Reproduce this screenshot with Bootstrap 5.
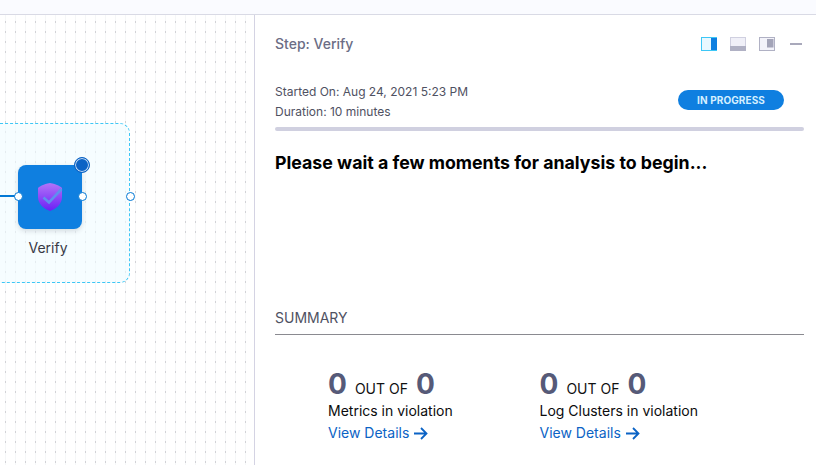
<!DOCTYPE html>
<html lang="en">
<head>
<meta charset="utf-8">
<title>Step: Verify</title>
<link rel="stylesheet" href="https://cdn.jsdelivr.net/npm/bootstrap@5.3.0/dist/css/bootstrap.min.css">
<style>
html,body{height:465px;overflow:hidden;background:#fff;font-family:Inter,"Liberation Sans",sans-serif}
.shell{height:465px}
.topstrip{height:15px;background:#fafbff;border-bottom:1px solid #d9dae5;flex:none}
.canvas-area{width:255px;flex:none;position:relative;border-right:1px solid #d4d3e3;overflow:hidden;background-color:#fff;
 background-image:linear-gradient(to bottom,#d2d2d6 0,#d2d2d6 2px,#f5f7f8 2px,#f5f7f8 10px);background-size:10px 10px;background-position:5px 6px;}
.canvas-grid{position:absolute;inset:0;background-image:linear-gradient(to right,transparent 0,transparent 1px,#fff 1px,#fff 10px);background-size:10px 10px;background-position:5px 0}
.grp{position:absolute;left:-20px;top:108px;width:150px;height:160px;border:1px dashed #3dc7f6;border-radius:10px;background:rgba(240,251,255,.6)}
.wire{position:absolute;left:0;top:180px;width:18px;height:2px;background:#0278d5}
.nodebox{position:absolute;left:18px;top:150px;width:64px;height:64px;border-radius:8px;background:#0f7fe0;box-shadow:0 2px 5px rgba(40,41,61,.16);display:flex;align-items:center;justify-content:center}
.port{position:absolute;width:9px;height:9px;border-radius:50%;background:#fff;border:1px solid #0278d5}
.port-a{left:13.5px;top:176.5px}.port-b{left:77.5px;top:176.5px}.port-c{left:125.5px;top:176.5px}
.running{position:absolute;left:74px;top:142px;width:16px;height:16px;border-radius:50%;background:#0b63c5;border:1px solid #0b63c5;box-shadow:inset 0 0 0 1px #c4dcf5}
.nodelabel{position:absolute;left:18px;top:224px;width:60px;text-align:center;font-size:14px;line-height:18px;color:#383946}
.detail{padding:0 12px 0 20px;min-width:0}
.stephead{height:58px;flex:none}
.steptitle{font-size:14px;font-weight:500;color:#6b6d85;line-height:20px}
.viewicons{gap:13px;margin-top:-1px;margin-right:2px}
.dashicon{margin-left:2px}
.meta{font-size:12px;line-height:20px;color:#4f5162;margin-top:9px}
.statuspill{width:106px;height:20px;border-radius:10px;background:#0f7fe0;color:#d5efff;font-size:10px;font-weight:700;line-height:20px;text-align:center;letter-spacing:.1px;margin-top:17px;margin-right:20px}
.prog{height:4px;border-radius:2px;background:#d0d0e0;margin-top:5px}
.waitmsg{font-size:17.75px;font-weight:700;color:#000;line-height:24px;margin:20px 0 0}
.sumhead{font-size:14px;line-height:20px;color:#4f5162;margin-top:133px;padding-bottom:6px;border-bottom:1px solid #8a8a90}
.stats{padding-left:53px;margin-top:35px}
.statcol{width:211.5px;flex:none}
.bignum{font-size:28px;font-weight:700;color:#565a78;line-height:28px}
.outof{font-size:14px;font-weight:400;color:#111;margin:0 8px;line-height:1}
.statlabel{font-size:14px;line-height:20px;color:#0b0b0d;margin-top:3px}
.statlink{font-size:14px;line-height:20px;color:#0b63c5;text-decoration:none;display:flex;align-items:center;gap:4px;margin-top:2px}
</style>
</head>
<body>
<div class="shell d-flex flex-column">
  <div class="topstrip"></div>
  <div class="d-flex flex-grow-1">
    <div class="canvas-area">
      <div class="canvas-grid"></div>
      <div class="grp"></div>
      <div class="wire"></div>
      <div class="nodebox">
        <svg width="26" height="30" viewBox="0 0 26 30">
          <defs><linearGradient id="sh" x1="0" y1="0" x2="0" y2="1"><stop offset="0" stop-color="#b274f8"/><stop offset="1" stop-color="#6b1ff5"/></linearGradient></defs>
          <path d="M13 1 C15 1 24 4 25 6 V15 C25 22 19 27 13 29 C7 27 1 22 1 15 V6 C2 4 11 1 13 1 Z" fill="url(#sh)"/>
          <path d="M6.5 15.5 L12 20.5 L24.5 7" fill="none" stroke="#5f8ef0" stroke-width="2.6"/>
        </svg>
      </div>
      <span class="port port-a"></span><span class="port port-b"></span><span class="port port-c"></span>
      <span class="running"></span>
      <div class="nodelabel">Verify</div>
    </div>
    <div class="detail flex-grow-1 d-flex flex-column">
      <div class="stephead d-flex justify-content-between align-items-center">
        <div class="steptitle">Step: Verify</div>
        <div class="viewicons d-flex align-items-center">
          <svg width="16" height="14" viewBox="0 0 16 14"><rect x=".5" y=".5" width="15" height="13" fill="#e8f8ff" stroke="#3dc7f6"/><rect x="10" y="1" width="6" height="12" fill="#0f7fe0"/></svg>
          <svg width="16" height="14" viewBox="0 0 16 14"><rect x=".5" y=".5" width="15" height="13" fill="#f0f0f8" stroke="#d0d0e0"/><rect x="0" y="9" width="16" height="5" fill="#b0b1c4"/></svg>
          <svg width="16" height="14" viewBox="0 0 16 14"><rect x=".5" y=".5" width="15" height="13" fill="#f3f3fa" stroke="#b0b1c4"/><rect x="8" y="2" width="6.5" height="8.5" fill="#a3a4b8"/></svg>
          <svg width="12" height="2" viewBox="0 0 12 2" class="dashicon"><rect width="12" height="2" fill="#a9a9bb"/></svg>
        </div>
      </div>
      <div class="d-flex justify-content-between align-items-start">
        <div class="meta">Started On: Aug 24, 2021 5:23 PM<br>Duration: 10 minutes</div>
        <div class="statuspill">IN PROGRESS</div>
      </div>
      <div class="prog"></div>
      <p class="waitmsg">Please wait a few moments for analysis to begin...</p>
      <div class="sumhead">SUMMARY</div>
      <div class="stats d-flex">
        <div class="statcol">
          <div class="bignum">0<span class="outof">OUT OF</span>0</div>
          <div class="statlabel">Metrics in violation</div>
          <a class="statlink" href="#">View Details <svg width="15" height="13" viewBox="0 0 15 13" fill="none" stroke="#0b63c5" stroke-width="1.8"><path d="M1 6.5H13.5M8 1l5.5 5.5L8 12"/></svg></a>
        </div>
        <div class="statcol">
          <div class="bignum">0<span class="outof">OUT OF</span>0</div>
          <div class="statlabel">Log Clusters in violation</div>
          <a class="statlink" href="#">View Details <svg width="15" height="13" viewBox="0 0 15 13" fill="none" stroke="#0b63c5" stroke-width="1.8"><path d="M1 6.5H13.5M8 1l5.5 5.5L8 12"/></svg></a>
        </div>
      </div>
    </div>
  </div>
</div>
<script src="https://cdn.jsdelivr.net/npm/bootstrap@5.3.0/dist/js/bootstrap.bundle.min.js"></script>
</body>
</html>
